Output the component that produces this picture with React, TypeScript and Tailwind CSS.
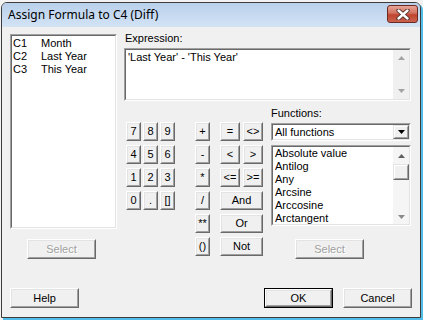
import React from "react";

type BtnProps = {
  cls: string;
  children?: React.ReactNode;
  disabled?: boolean;
  def?: boolean;
};

function Btn({ cls, children, disabled, def }: BtnProps) {
  const body = (
    <div className="w-full h-full border border-t-white border-l-white border-b-[#696969] border-r-[#696969] bg-[#f0f0f0]">
      <div className="w-full h-full border border-t-[#e3e3e3] border-l-[#e3e3e3] border-b-[#a0a0a0] border-r-[#a0a0a0] flex items-center justify-center">
        <span
          className={
            disabled
              ? "text-[#a0a0a0] [text-shadow:1px_1px_0_#ffffff]"
              : "text-black"
          }
        >
          {children}
        </span>
      </div>
    </div>
  );
  if (def) {
    return <div className={`${cls} border border-black`}>{body}</div>;
  }
  return <div className={cls}>{body}</div>;
}

function Sunken({ cls, children }: { cls: string; children?: React.ReactNode }) {
  return (
    <div className={`${cls} border border-t-[#a0a0a0] border-l-[#a0a0a0] border-b-white border-r-white`}>
      <div className="w-full h-full border border-t-[#696969] border-l-[#696969] border-b-[#e3e3e3] border-r-[#e3e3e3] bg-white flex">
        {children}
      </div>
    </div>
  );
}

function Tri({ up, color }: { up?: boolean; color: string }) {
  return (
    <svg width="7" height="4" viewBox="0 0 7 4">
      {up ? (
        <polygon points="0,4 7,4 3.5,0" fill={color} />
      ) : (
        <polygon points="0,0 7,0 3.5,4" fill={color} />
      )}
    </svg>
  );
}

function Raised({ cls, children }: { cls: string; children?: React.ReactNode }) {
  return (
    <div className={`${cls} border border-t-[#e3e3e3] border-l-[#e3e3e3] border-b-[#696969] border-r-[#696969] bg-[#f0f0f0]`}>
      <div className="w-full h-full border border-t-white border-l-white border-b-[#a0a0a0] border-r-[#a0a0a0] flex items-center justify-center">
        {children}
      </div>
    </div>
  );
}

export default function App() {
  const digits = ["7", "8", "9", "4", "5", "6", "1", "2", "3", "0", ".", "[]"];
  const ops = ["+", "-", "*", "/", "**", "()"];
  const funcs = ["Absolute value", "Antilog", "Any", "Arcsine", "Arccosine", "Arctangent"];
  return (
    <div className="w-[423px] h-[320px] bg-[#f2f2f2] overflow-hidden font-['Liberation_Sans',Arial,sans-serif] text-[11px] leading-[13px] text-black">
      <div className="ml-[1px] mt-[2px] w-[420px] h-[316px] border border-[#3c3c3c] rounded-t-[6px] bg-[#f0f0f0] flex flex-col shadow-[2px_2px_0_0_#52bde8]">
        {/* Title bar */}
        <div className="h-[24px] shrink-0 rounded-t-[5px] bg-[linear-gradient(#b9d0eb,#d3e3f5)] flex justify-between pl-[6px] pr-[2px]">
          <span className="self-center font-['Noto_Sans','Open_Sans',sans-serif] text-[12px] leading-[16px] text-black">
            Assign Formula to C4 (Diff)
          </span>
          <div className="mt-[2px] w-[31px] h-[18px] rounded-[3px] border border-[#6b2a22] bg-[linear-gradient(#e9a596,#d0705f_45%,#c0442f_55%,#c9624f)] flex items-center justify-center">
            <svg width="14" height="11" viewBox="0 0 14 11">
              <path d="M2.5 1.5 L11.5 9.5 M11.5 1.5 L2.5 9.5" stroke="#4a2a26" strokeWidth="4.2" strokeLinecap="round" />
              <path d="M2.5 1.5 L11.5 9.5 M11.5 1.5 L2.5 9.5" stroke="#ffffff" strokeWidth="2.4" strokeLinecap="round" />
            </svg>
          </div>
        </div>

        {/* Body */}
        <div className="flex-1 flex flex-col">
          <div className="flex pt-[4px]">
            {/* Left column */}
            <div className="ml-[8px] mt-[3px] w-[107px] flex flex-col">
              <Sunken cls="w-[107px] h-[195px]">
                <div className="flex flex-col pt-[1px] pl-[1px]">
                  {[
                    ["C1", "Month"],
                    ["C2", "Last Year"],
                    ["C3", "This Year"],
                  ].map(([c, n]) => (
                    <div key={c} className="flex h-[13px]">
                      <span className="w-[28px]">{c}</span>
                      <span>{n}</span>
                    </div>
                  ))}
                </div>
              </Sunken>
              <div className="mt-[10px] ml-[17px]">
                <Btn cls="w-[69px] h-[20px]" disabled>
                  Select
                </Btn>
              </div>
            </div>

            {/* Right column */}
            <div className="ml-[7px] w-[287px] flex flex-col">
              <div className="h-[17px] pt-[1px] pl-[1px]">Expression:</div>
              <Sunken cls="w-[287px] h-[53px]">
                <div className="flex-1 pl-[2px] pt-[1px]">'Last Year' - 'This Year'</div>
                <div className="w-[16px] h-full bg-[#f0f0f0] flex flex-col items-center justify-between pt-[6px] pb-[6px]">
                  <Tri up color="#a3a3a3" />
                  <Tri color="#a3a3a3" />
                </div>
              </Sunken>

              <div className="flex">
                {/* Keypad */}
                <div className="ml-[2px] mt-[21px] flex items-start">
                  <div className="grid grid-cols-[15px_15px_15px] gap-x-[2px] gap-y-[4px]">
                    {digits.map((d) => (
                      <Btn key={d} cls="w-[15px] h-[19px]">
                        {d}
                      </Btn>
                    ))}
                  </div>
                  <div className="ml-[20px] flex flex-col gap-[4px]">
                    {ops.map((o) => (
                      <Btn key={o} cls="w-[15px] h-[19px]">
                        {o}
                      </Btn>
                    ))}
                  </div>
                  <div className="ml-[10px] grid grid-cols-[20px_20px] gap-x-[3px] gap-y-[4px]">
                    <Btn cls="w-[20px] h-[19px]">=</Btn>
                    <Btn cls="w-[20px] h-[19px]">&lt;&gt;</Btn>
                    <Btn cls="w-[20px] h-[19px]">&lt;</Btn>
                    <Btn cls="w-[20px] h-[19px]">&gt;</Btn>
                    <Btn cls="w-[20px] h-[19px]">&lt;=</Btn>
                    <Btn cls="w-[20px] h-[19px]">&gt;=</Btn>
                    <div className="col-span-2">
                      <Btn cls="w-[43px] h-[19px]">And</Btn>
                    </div>
                    <div className="col-span-2">
                      <Btn cls="w-[43px] h-[19px]">Or</Btn>
                    </div>
                    <div className="col-span-2">
                      <Btn cls="w-[43px] h-[19px]">Not</Btn>
                    </div>
                  </div>
                </div>

                {/* Functions */}
                <div className="ml-[8px] mt-[6px] w-[140px] flex flex-col">
                  <div className="h-[16px]">Functions:</div>
                  <Sunken cls="w-[140px] h-[18px]">
                    <div className="flex-1 pl-[2px] flex items-center">All functions</div>
                    <Raised cls="w-[16px] h-[14px]">
                      <Tri color="#000000" />
                    </Raised>
                  </Sunken>
                  <Sunken cls="mt-[4px] w-[140px] h-[81px]">
                    <div className="flex-1 flex flex-col pl-[2px]">
                      {funcs.map((f) => (
                        <div key={f} className="h-[13px]">
                          {f}
                        </div>
                      ))}
                    </div>
                    <div className="w-[16px] h-full bg-[#f5f5f5] flex flex-col items-center">
                      <div className="h-[17px] flex items-center justify-center">
                        <Tri up color="#606060" />
                      </div>
                      <Raised cls="w-[16px] h-[16px]" />
                      <div className="flex-1" />
                      <div className="h-[14px] flex items-center justify-center">
                        <Tri color="#8a8a8a" />
                      </div>
                    </div>
                  </Sunken>
                  <div className="mt-[13px] ml-[24px]">
                    <Btn cls="w-[69px] h-[20px]" disabled>
                      Select
                    </Btn>
                  </div>
                </div>
              </div>
            </div>
          </div>

          {/* Bottom buttons */}
          <div className="mt-auto flex justify-between pl-[8px] pr-[8px] pb-[9px]">
            <Btn cls="w-[69px] h-[20px]">Help</Btn>
            <div className="flex gap-[10px]">
              <Btn cls="w-[69px] h-[20px]" def>
                OK
              </Btn>
              <Btn cls="w-[69px] h-[20px]">Cancel</Btn>
            </div>
          </div>
        </div>
      </div>
    </div>
  );
}
